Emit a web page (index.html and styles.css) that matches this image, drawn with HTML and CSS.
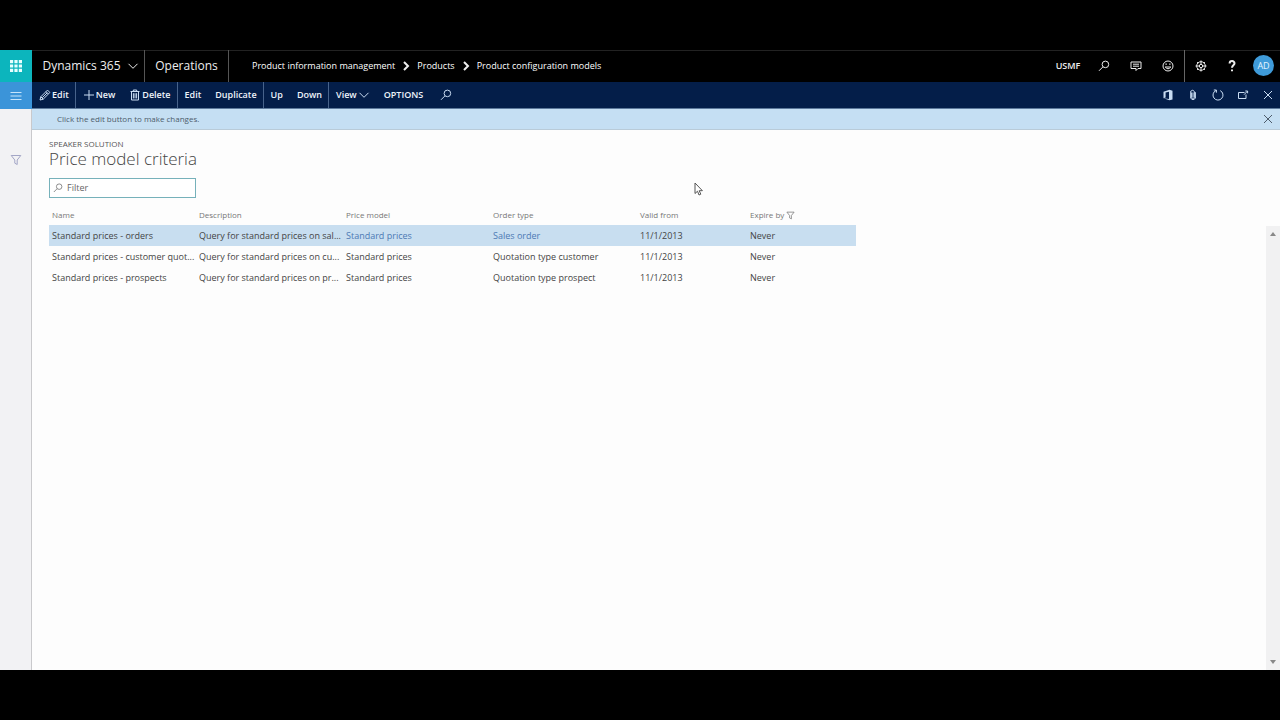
FILE: index.html
```html
<!DOCTYPE html>
<html lang="en">
<head>
<meta charset="utf-8">
<title>Price model criteria - Dynamics 365</title>
<link rel="stylesheet" href="styles.css">
</head>
<body>
<svg class="sprite" aria-hidden="true">
  <symbol id="search" viewBox="0 0 12 12"><circle cx="7.4" cy="4.4" r="3.3"/><path d="M5 6.8 1 10.8"/></symbol>
  <symbol id="chevron" viewBox="0 0 12 12"><path d="M1.5 3.8 6 8.3l4.500-4.500"/></symbol>
  <symbol id="close" viewBox="0 0 12 12"><path d="m2 2 8 8m0-8-8 8"/></symbol>
  <symbol id="funnel" viewBox="0 0 12 12"><path d="M1.200 1.500h9.600L7.200 6v4.500l-2.400-1.300V6z"/></symbol>
</svg>
<div class="app">
  <header class="top">
    <button class="waffle" aria-label="App launcher"><svg viewBox="0 0 12 12"><path d="M0 0h3.200v3.200H0zM4.400 0h3.200v3.200H4.400zM8.800 0H12v3.200H8.800zM0 4.400h3.200v3.200H0zM4.400 4.400h3.200v3.200H4.400zM8.800 4.400H12v3.200H8.800zM0 8.800h3.200V12H0zM4.400 8.800h3.200V12H4.400zM8.800 8.800H12V12H8.800z"/></svg></button>
    <button class="brand">Dynamics 365 <svg class="icon" viewBox="0 0 12 12"><path d="M1.500 3.800 6 8.300l4.500-4.500"/></svg></button>
    <a class="area" href="#">Operations</a>
    <nav class="crumbs" aria-label="Breadcrumb">
      <a href="#">Product information management</a>
      <svg class="sep" viewBox="0 0 8 10"><path d="m2 1 4 4-4 4"/></svg>
      <a href="#">Products</a>
      <svg class="sep" viewBox="0 0 8 10"><path d="m2 1 4 4-4 4"/></svg>
      <a href="#">Product configuration models</a>
    </nav>
    <button class="company">USMF</button>
    <button class="tool" aria-label="Search"><svg class="icon"><use href="#search"/></svg></button>
    <button class="tool" aria-label="Messages"><svg class="icon" viewBox="0 0 12 12"><path d="M1 2h10v6.500H8L6 10.500v-2H1zM3 4.200h6M3 6.200h6"/></svg></button>
    <button class="tool" aria-label="Feedback"><svg class="icon" viewBox="0 0 12 12"><circle cx="6" cy="6" r="5"/><path d="M3.200 7q2.800 3.600 5.600 0zM4.100 3.400v1.600M7.900 3.400v1.600"/></svg></button>
    <button class="tool divided" aria-label="Settings"><svg class="icon" viewBox="0 0 12 12"><circle cx="6" cy="6" r="4.300"/><circle cx="6" cy="6" r="1.700"/><path d="M6 .5v3.800M6 7.700v3.800M.5 6h3.800M7.700 6h3.800M2.100 2.100l1 1M8.900 8.900l1 1M2.100 9.900l1-1M8.900 3.100l1-1"/></svg></button>
    <button class="tool" aria-label="Help"><svg class="icon help" viewBox="0 0 12 12"><path d="M3.600 3.500C3.700.2 8.600.4 8.500 3.400 8.400 5.300 6 5.300 6 7.800M6 9.500v1.700"/></svg></button>
    <button class="user">AD</button>
  </header>

  <div class="actions">
    <button class="menu" aria-label="Navigation"><svg class="icon" viewBox="0 0 12 12"><path d="M.5 2.500h11M.5 6h11M.5 9.500h11"/></svg></button>
    <button class="cmd end"><svg class="icon" viewBox="0 0 12 12"><path d="m1 11 .8-3.200L8.500 1.100l2.400 2.400-6.700 6.700zM7 2.600 9.400 5M1.800 7.800l2.400 2.400M3.200 8.800l5-5"/></svg>Edit</button>
    <button class="cmd"><svg class="icon" viewBox="0 0 12 12"><path d="M6 1v10M1 6h10"/></svg>New</button>
    <button class="cmd end"><svg class="icon" viewBox="0 0 12 12"><path d="M1.500 2.500h9M4.300 2.300V1h3.400v1.300M2.500 2.500V11h7V2.500M4.400 4.200v5.200M6 4.200v5.200M7.600 4.200v5.200"/></svg>Delete</button>
    <button class="cmd">Edit</button>
    <button class="cmd end">Duplicate</button>
    <button class="cmd">Up</button>
    <button class="cmd end">Down</button>
    <button class="cmd">View<svg class="icon"><use href="#chevron"/></svg></button>
    <button class="cmd">OPTIONS</button>
    <button class="cmd find" aria-label="Search actions"><svg class="icon"><use href="#search"/></svg></button>
    <div class="page-tools">
      <button aria-label="Open in Office"><svg class="icon" viewBox="0 0 12 12"><path class="solid" d="M1.500 2.800 7.500.8l3 .9v8.700l-3 .9-6-2 5.500.6V2.800L3.600 3.600v4.900l-2.100.8z"/></svg></button>
      <button aria-label="Attachments"><svg class="icon" viewBox="0 0 12 12"><path d="M4.600 3.500v5.200q1.400 1.600 2.800 0V2.500Q6 .1 3.700 2.200v7.100q2.300 3 4.700 0V3.200M6 3.500v4.700"/></svg></button>
      <button aria-label="Refresh"><svg class="icon" viewBox="0 0 12 12"><path d="M4 1.500a5 5 0 1 0 4.200.1M1.800 1h2.600v2.700"/></svg></button>
      <button aria-label="Open in new window"><svg class="icon" viewBox="0 0 12 12"><path d="M7.500 3.500h-6v6h7.500V5.500M7 5.700l3.300-3.400M8.300 2h2.300v2.300"/></svg></button>
      <button aria-label="Close"><svg class="icon"><use href="#close"/></svg></button>
    </div>
  </div>

  <div class="workspace">
    <aside class="rail"><button aria-label="Show filters"><svg class="icon"><use href="#funnel"/></svg></button></aside>
    <div class="content">
      <div class="message"><span>Click the edit button to make changes.</span><button aria-label="Dismiss"><svg class="icon"><use href="#close"/></svg></button></div>
      <main class="form">
        <p class="caption">SPEAKER SOLUTION</p>
        <h1>Price model criteria</h1>
        <label class="filter"><svg class="icon"><use href="#search"/></svg><input type="text" placeholder="Filter" aria-label="Filter"></label>
        <table>
          <colgroup><col class="wide"><col class="wide"><col class="wide"><col class="wide"><col class="date"><col></colgroup>
          <thead><tr><th>Name</th><th>Description</th><th>Price model</th><th>Order type</th><th>Valid from</th><th>Expire by <svg class="icon"><use href="#funnel"/></svg></th></tr></thead>
          <tbody>
            <tr class="selected"><td>Standard prices - orders</td><td>Query for standard prices on sal...</td><td><a href="#">Standard prices</a></td><td><a href="#">Sales order</a></td><td>11/1/2013</td><td>Never</td></tr>
            <tr><td>Standard prices - customer quot...</td><td>Query for standard prices on cu...</td><td>Standard prices</td><td>Quotation type customer</td><td>11/1/2013</td><td>Never</td></tr>
            <tr><td>Standard prices - prospects</td><td>Query for standard prices on pr...</td><td>Standard prices</td><td>Quotation type prospect</td><td>11/1/2013</td><td>Never</td></tr>
          </tbody>
        </table>
      </main>
      <div class="scroll" aria-hidden="true"><svg viewBox="0 0 6 4"><path d="M0 4 3 0l3 4z"/></svg><svg viewBox="0 0 6 4"><path d="m0 0 3 4 3-4z"/></svg></div>
    </div>
  </div>
</div>
<svg class="pointer" viewBox="0 0 9 14" aria-hidden="true"><path d="M1 1v10.500l2.500-2.300L5 13l1.800-.8-1.600-3.500H8.400z"/></svg>
</body>
</html>
```
FILE: styles.css
```css
* { box-sizing: border-box; }
body {
  margin: 0;
  height: 100vh;
  padding: 50px 0;
  background: #000;
  color: #444;
  font: 9px/12px "Open Sans", "Noto Sans", sans-serif;
}
button {
  margin: 0;
  padding: 0;
  border: 0;
  background: none;
  color: inherit;
  font: inherit;
  display: flex;
  align-items: center;
  justify-content: center;
}
a { color: inherit; text-decoration: none; }
.sprite { display: none; }
.icon { width: 12px; height: 12px; flex: none; fill: none; stroke: currentColor; stroke-width: 1; }
.help { stroke-width: 2; }
.solid { fill: currentColor; stroke: none; }
.app { height: 100%; display: flex; flex-direction: column; background: #fdfdfd; }

.top { display: flex; height: 32px; flex: none; background: #000; color: #eee; box-shadow: inset 0 1px #222; }
.waffle { width: 32px; background: #0cb5bd; }
.waffle svg { width: 12px; height: 12px; fill: #e8ffff; }
.brand, .area { font-size: 12px; line-height: 18px; }
.brand { width: 113px; padding-left: 5px; gap: 6px; border-right: 1px solid #555; }
.area { width: 84px; display: flex; align-items: center; justify-content: center; border-right: 1px solid #555; }
.crumbs { display: flex; align-items: center; gap: 7px; padding-left: 23px; margin-right: auto; font-weight: 500; color: #fff; }
.crumbs .sep { width: 8px; height: 10px; fill: none; stroke: #eee; stroke-width: 2; }
.company { width: 40px; font-weight: 600; }
.tool { width: 32px; }
.divided { border-left: 1px solid #666; }
.user { width: 21px; height: 21px; margin: 5px 6px 0 5px; border-radius: 50%; background: #3f9bd9; color: #e4f5ff; }

.actions { display: flex; height: 27px; flex: none; background: #041e49; color: #eef3fa; border-bottom: 1px solid #5d7a9c; }
.menu { width: 32px; margin-bottom: -1px; background: #3b94d9; color: #c6e4fb; }
.cmd { padding: 0 7px; gap: 1px; font-weight: 600; }
.cmd .icon { color: #c9dcf2; }
.end { padding-right: 6px; border-right: 1px solid #48638b; }
.find { padding-left: 10px; }
.page-tools { display: flex; margin-left: auto; color: #c9dcf2; }
.page-tools button { width: 25px; }

.workspace { flex: 1; display: flex; min-height: 0; }
.rail { width: 32px; flex: none; background: #f2f2f4; border-right: 1px solid #c9c9cc; padding-top: 45px; color: #a3a6c6; }
.rail button { width: 31px; }
.content { flex: 1; min-width: 0; display: grid; grid-template: 21px 1fr / 1fr 14px; }
.message { grid-column: 1 / -1; display: flex; align-items: center; justify-content: space-between; padding: 0 6px 0 25px; background: #c5dff3; color: #4d5c6b; border-bottom: 1px solid #b9cbd8; font-size: 8px; }
.form { padding: 8px 0 0 17px; }
.caption { margin: 0; color: #555; font-size: 8px; }
h1 { margin: 0; font-size: 17px; line-height: 18px; font-weight: 300; color: #444; }
.filter { display: flex; align-items: center; gap: 4px; width: 147px; height: 20px; margin-top: 10px; padding-left: 3px; border: 1px solid #76b1ba; color: #777; background: #fff; }
.filter .icon { width: 10px; height: 10px; }
.filter input { flex: 1; min-width: 0; border: 0; padding: 0; outline: 0; background: none; color: #555; font: inherit; }
.filter input::placeholder { color: #666; opacity: 1; }
table { width: 807px; margin-top: 6px; table-layout: fixed; border-collapse: collapse; }
.wide { width: 147px; }
.date { width: 110px; }
th, td { height: 21px; padding: 0 0 0 3px; text-align: left; font-weight: 400; white-space: nowrap; }
th { color: #777; font-size: 8px; }
th .icon { width: 9px; height: 9px; vertical-align: middle; }
.selected { background: #c8def0; }
.selected a { color: #4c79b4; }
.scroll { margin-top: 96px; padding: 6px 0; display: flex; flex-direction: column; align-items: center; justify-content: space-between; background: #f1f1f2; }
.scroll svg { width: 6px; height: 4px; fill: #888; }
.pointer { position: absolute; left: 694px; top: 182px; width: 9px; height: 14px; fill: #fff; stroke: #555; stroke-width: 1; }
```
